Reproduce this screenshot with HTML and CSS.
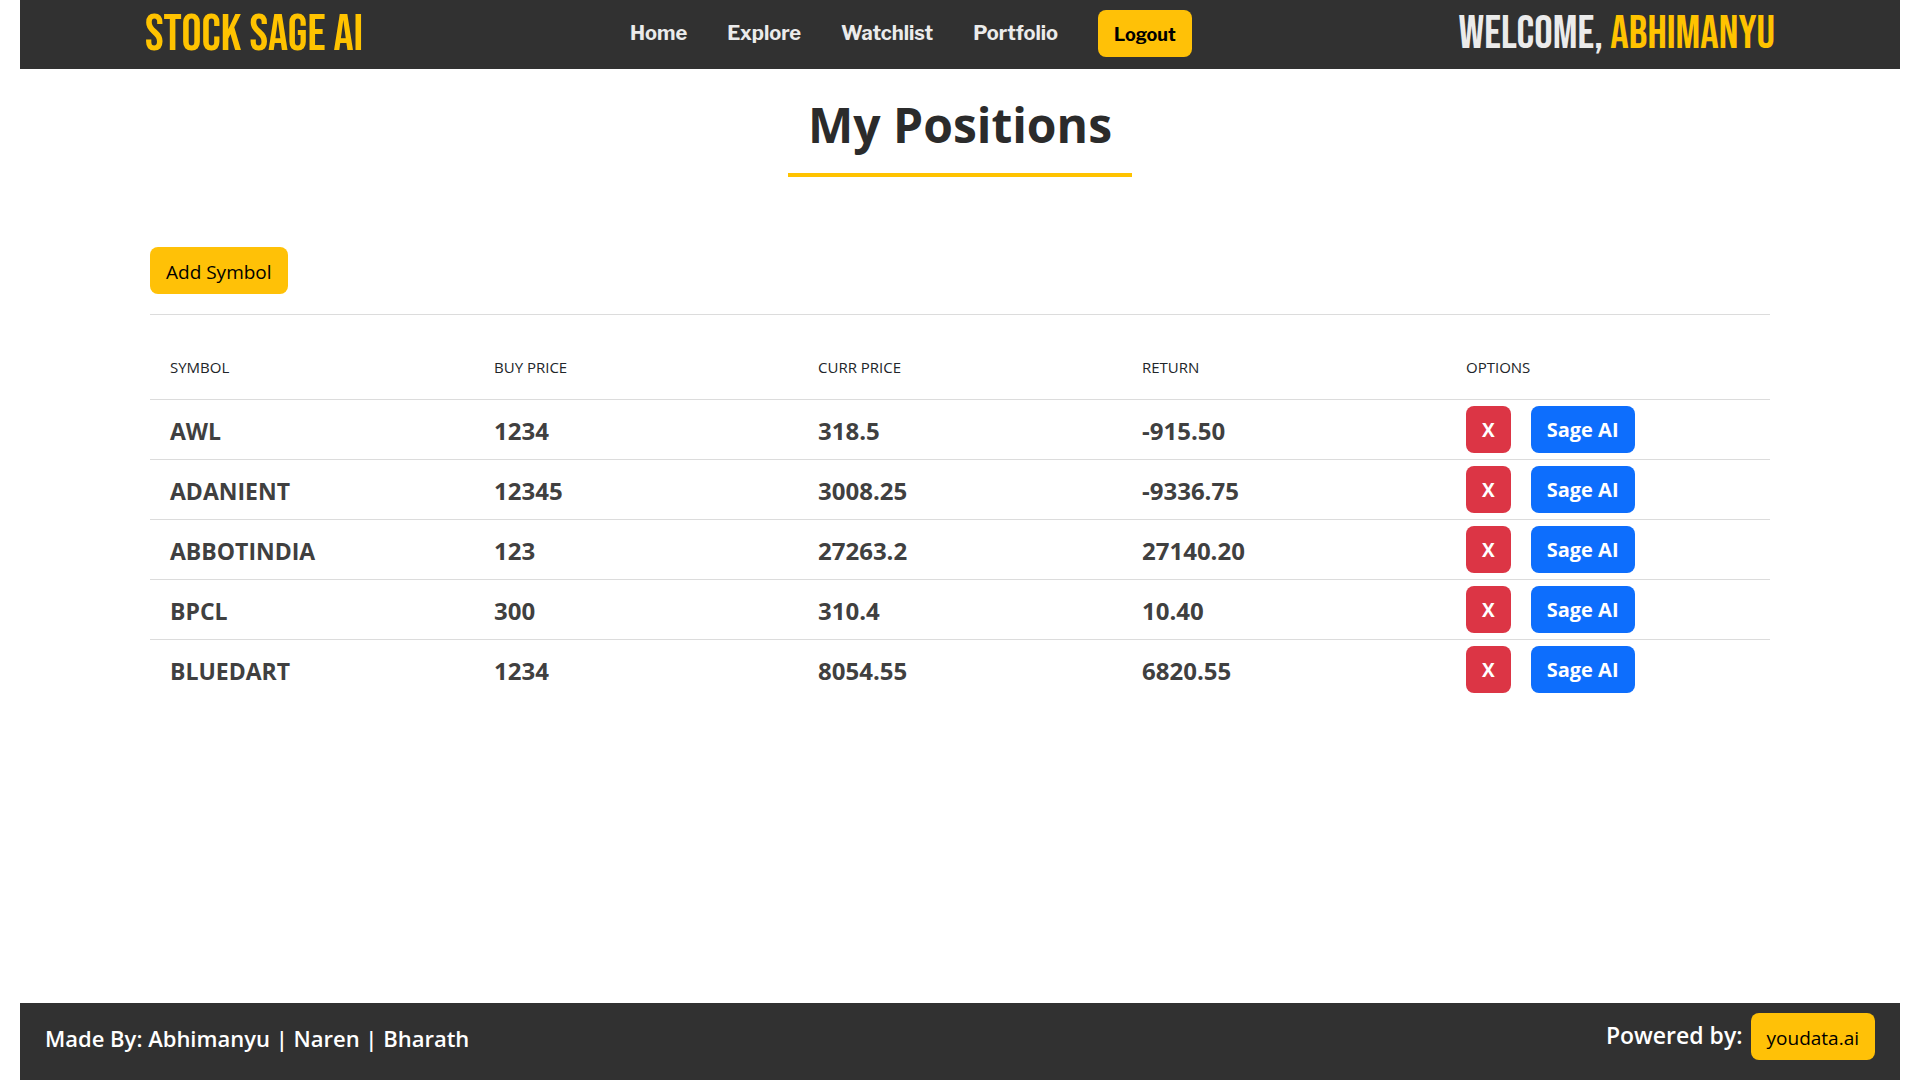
FILE: index.html
```html
<!DOCTYPE html>
<html lang="en">
<head>
<meta charset="utf-8">
<meta name="viewport" content="width=device-width, initial-scale=1">
<title>Stock Sage AI - My Positions</title>
<link rel="stylesheet" href="styles.css">
</head>
<body>
<header class="site-header">
  <a class="brand" href="#">STOCK SAGE AI</a>
  <nav class="nav">
    <a class="nav-link" href="#">Home</a>
    <a class="nav-link" href="#">Explore</a>
    <a class="nav-link" href="#">Watchlist</a>
    <a class="nav-link" href="#">Portfolio</a>
    <button class="btn btn-warning btn-logout" type="button">Logout</button>
  </nav>
  <div class="welcome">WELCOME, <span class="welcome-name">ABHIMANYU</span></div>
</header>
<main class="content">
  <h1 class="page-title">My Positions</h1>
  <div class="toolbar">
    <button class="btn btn-warning" type="button">Add Symbol</button>
  </div>
  <table class="positions">
    <thead>
      <tr><th scope="col">SYMBOL</th><th scope="col">BUY PRICE</th><th scope="col">CURR PRICE</th><th scope="col">RETURN</th><th scope="col">OPTIONS</th></tr>
    </thead>
    <tbody>
      <tr><td class="symbol">AWL</td><td>1234</td><td>318.5</td><td>-915.50</td><td class="actions"><div class="options"><button class="btn btn-danger" type="button">X</button><button class="btn btn-primary" type="button">Sage AI</button></div></td></tr>
      <tr><td class="symbol">ADANIENT</td><td>12345</td><td>3008.25</td><td>-9336.75</td><td class="actions"><div class="options"><button class="btn btn-danger" type="button">X</button><button class="btn btn-primary" type="button">Sage AI</button></div></td></tr>
      <tr><td class="symbol">ABBOTINDIA</td><td>123</td><td>27263.2</td><td>27140.20</td><td class="actions"><div class="options"><button class="btn btn-danger" type="button">X</button><button class="btn btn-primary" type="button">Sage AI</button></div></td></tr>
      <tr><td class="symbol">BPCL</td><td>300</td><td>310.4</td><td>10.40</td><td class="actions"><div class="options"><button class="btn btn-danger" type="button">X</button><button class="btn btn-primary" type="button">Sage AI</button></div></td></tr>
      <tr><td class="symbol">BLUEDART</td><td>1234</td><td>8054.55</td><td>6820.55</td><td class="actions"><div class="options"><button class="btn btn-danger" type="button">X</button><button class="btn btn-primary" type="button">Sage AI</button></div></td></tr>
    </tbody>
  </table>
</main>
<footer class="site-footer">
  <p class="credits">Made By: Abhimanyu | Naren | Bharath</p>
  <div class="powered"><span class="powered-label">Powered by:</span><a class="btn btn-warning" href="#">youdata.ai</a></div>
</footer>
</body>
</html>
```
FILE: styles.css
```css
* {
  box-sizing: border-box;
}

body {
  margin: 0;
  padding: 0 20px;
  min-height: 100vh;
  display: flex;
  flex-direction: column;
  background: #fff;
  color: #212529;
  font-family: "Segoe UI", "Open Sans", "Noto Sans", sans-serif;
  font-size: 19px;
}

a {
  text-decoration: none;
}

.site-header {
  display: flex;
  align-items: center;
  justify-content: space-between;
  min-height: 69px;
  padding: 0 125px 2px;
  background: #313131;
}

.brand,
.welcome {
  font-family: "Bebas Neue", "Liberation Sans Narrow", "Liberation Sans", sans-serif;
  font-weight: 400;
  line-height: 64px;
  padding-top: 2px;
  white-space: nowrap;
}

.brand {
  font-size: 50px;
  color: #ffc300;
}

.welcome {
  font-size: 46px;
  color: #ebebeb;
}

.welcome-name {
  color: #ffc300;
}

.nav {
  display: flex;
  align-items: center;
  gap: 40px;
}

.nav-link {
  font-family: "Libre Franklin", "Liberation Sans", sans-serif;
  font-size: 20px;
  font-weight: 800;
  line-height: 24px;
  padding-bottom: 2px;
  color: #ebebeb;
}

.btn {
  display: inline-flex;
  align-items: center;
  justify-content: center;
  height: 47px;
  padding: 2px 16px 0;
  border: 0;
  border-radius: 8px;
  font-family: inherit;
  font-size: 19px;
  line-height: 28px;
  color: #fff;
  white-space: nowrap;
  cursor: pointer;
}

.btn-warning {
  background: #ffc107;
  color: #000;
}

.btn-danger {
  background: #dc3545;
  font-weight: 700;
}

.btn-primary {
  background: #0d6efd;
  font-size: 20px;
  font-weight: 700;
}

.btn-logout {
  font-family: "Libre Franklin", "Liberation Sans", sans-serif;
  font-size: 18px;
  font-weight: 700;
}

.nav .nav-link {
  font-weight: 700;
}

.content {
  flex: 1;
  display: flex;
  flex-direction: column;
  padding: 20px 130px;
}

.page-title {
  align-self: center;
  margin: 0 0 70px;
  padding: 6px 20px 18px;
  border-bottom: 4px solid #ffc300;
  font-size: 48px;
  font-weight: 700;
  line-height: 60px;
  color: #2b2b2b;
}

.toolbar {
  padding-bottom: 20px;
  border-bottom: 1px solid #dcdcdc;
}

.positions {
  width: 100%;
  table-layout: fixed;
  border-collapse: collapse;
  text-align: left;
}

.positions th {
  height: 84px;
  padding: 20px 20px 0;
  font-size: 15px;
  font-weight: 500;
  line-height: 20px;
}

.positions td {
  height: 60px;
  padding: 3px 20px 0;
  border-top: 1px solid #dcdcdc;
  font-size: 24px;
  font-weight: 700;
  line-height: 32px;
  color: #404040;
}

.positions .symbol {
  font-size: 23px;
}

.positions .actions {
  padding-top: 0;
}

.options {
  display: flex;
  gap: 20px;
}

.site-footer {
  display: flex;
  justify-content: space-between;
  align-items: flex-start;
  min-height: 77px;
  padding: 10px 25px;
  background: #313131;
  color: #fff;
  font-size: 23px;
  font-weight: 600;
  line-height: 32px;
}

.credits {
  margin: 0;
  padding-top: 9px;
  font-size: 22px;
}

.powered {
  display: flex;
  align-items: center;
  gap: 8px;
}

.powered-label {
  padding-bottom: 4px;
}

.powered .btn {
  font-weight: 400;
}
```
